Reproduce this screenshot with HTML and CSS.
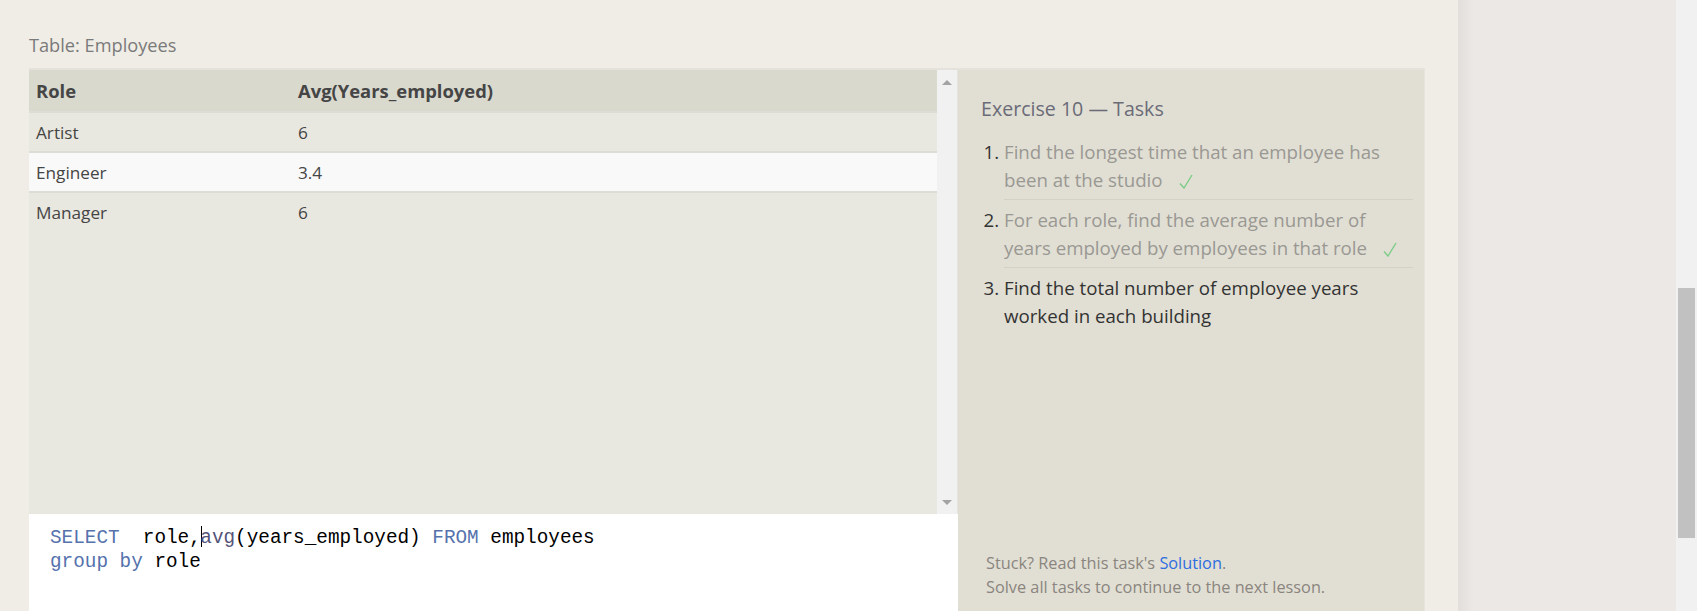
FILE: index.html
```html
<!DOCTYPE html>
<html lang="en">
<head>
<meta charset="utf-8">
<title>SQL Lesson — Exercise 10</title>
<link rel="stylesheet" href="styles.css">
</head>
<body>
<div class="page">
  <main class="content">
    <div class="caption">Table: Employees</div>
    <div class="workspace">
      <div class="left">
        <div class="results">
          <div class="table-area">
            <table class="grid">
              <thead>
                <tr><th class="c1">Role</th><th>Avg(Years_employed)</th></tr>
              </thead>
              <tbody>
                <tr><td class="c1">Artist</td><td>6</td></tr>
                <tr class="hl"><td class="c1">Engineer</td><td>3.4</td></tr>
                <tr><td class="c1">Manager</td><td>6</td></tr>
              </tbody>
            </table>
          </div>
          <div class="vscroll">
            <span class="arrow up"></span>
            <span class="arrow down"></span>
          </div>
        </div>
        <div class="editor">
<pre class="code"><span class="kw">SELECT</span>  role,<span class="caret"></span><span class="fn">avg</span>(years_employed) <span class="kw">FROM</span> employees
<span class="kw">group</span> <span class="kw">by</span> role</pre>
        </div>
      </div>
      <aside class="tasks">
        <h3 class="tasks-title">Exercise 10 — Tasks</h3>
        <ol class="task-list">
          <li class="done"><span class="task-text">Find the longest time that an employee has<br>been at the studio<svg class="check" width="14" height="15" viewBox="0 0 14 15"><polyline points="1,9.5 5,14 13,1" fill="none" stroke="#7ccb86" stroke-width="1.4"/></svg></span></li>
          <li class="done"><span class="task-text">For each role, find the average number of<br>years employed by employees in that role<svg class="check" width="14" height="15" viewBox="0 0 14 15"><polyline points="1,9.5 5,14 13,1" fill="none" stroke="#7ccb86" stroke-width="1.4"/></svg></span></li>
          <li><span class="task-text">Find the total number of employee years<br>worked in each building</span></li>
        </ol>
        <div class="tasks-footer">
          <div>Stuck? Read this task's <a class="link" href="#">Solution</a>.</div>
          <div>Solve all tasks to continue to the next lesson.</div>
        </div>
      </aside>
    </div>
  </main>
  <div class="side"></div>
  <div class="page-scroll"><div class="thumb"></div></div>
</div>
</body>
</html>
```

FILE: styles.css
```css
* { box-sizing: border-box; }
html, body { margin: 0; padding: 0; }
body {
  background: #f0ede6;
  font-family: "Open Sans", Lato, sans-serif;
  overflow: hidden;
}
.page {
  display: flex;
  height: 611px;
  overflow: hidden;
}
.content {
  width: 1458px;
  flex: none;
  padding: 33px 0 0 29px;
}
.caption {
  font-size: 18.2px;
  line-height: 24px;
  color: #7a7a7a;
  margin-bottom: 11px;
}
.workspace {
  display: flex;
  width: 1396px;
  border-top: 2px solid #e4e2db;
}
.left {
  width: 929px;
  flex: none;
  display: flex;
  flex-direction: column;
}
.results {
  display: flex;
  height: 444px;
}
.table-area {
  flex: 1;
  background: #e9e8e0;
}
.grid {
  width: 100%;
  border-collapse: collapse;
}
.grid th {
  background: #d9d9ce;
  height: 42px;
  text-align: left;
  font-weight: 700;
  font-size: 18.4px;
  color: #454545;
  padding: 0 7px;
}
.grid td {
  height: 40px;
  font-size: 17.2px;
  color: #454545;
  padding: 0 7px;
  border-top: 2px solid #dddcd5;
}
.grid .c1 { width: 262px; }
.grid tr.hl td { background: #f9f9f9; }
.vscroll {
  width: 21px;
  background: #f1f1f1;
  border-right: 1px solid #e6e4de;
  display: flex;
  flex-direction: column;
  justify-content: space-between;
  align-items: center;
  padding: 10px 0 9px;
}
.arrow {
  width: 0;
  height: 0;
  border-left: 5px solid transparent;
  border-right: 5px solid transparent;
}
.arrow.up { border-bottom: 5px solid #a3a3a3; }
.arrow.down { border-top: 5px solid #a3a3a3; }
.editor {
  background: #ffffff;
  height: 110px;
  padding: 12px 0 0 21px;
}
.code {
  margin: 0;
  font-family: "Liberation Mono", "DejaVu Sans Mono", monospace;
  font-size: 19.33px;
  line-height: 24px;
  color: #000;
}
.kw { color: #5572ad; }
.fn { color: #55557a; }
.caret {
  display: inline-block;
  width: 0;
  height: 21px;
  border-left: 1.5px solid #000;
  margin-right: -1.5px;
  vertical-align: -4px;
}
.tasks {
  width: 467px;
  flex: none;
  height: 541px;
  background: #e1dfd4;
  border-right: 1px solid #e6e4dc;
  display: flex;
  flex-direction: column;
  padding: 26px 11px 12px 23px;
}
.tasks-title {
  margin: 0;
  font-size: 19.6px;
  line-height: 26px;
  font-weight: 400;
  color: #6b6b78;
}
.task-list {
  margin: 10px 0 0;
  padding: 0 0 0 23px;
  color: #333;
  font-size: 18.7px;
  line-height: 28px;
}
.task-list li {
  padding: 6px 0 5px;
  border-bottom: 1px solid #d4d2c7;
}
.task-list li:last-child { border-bottom: none; }
.task-list li.done .task-text { color: #9a9893; }
.check {
  margin-left: 16px;
  vertical-align: -2px;
}
.tasks-footer {
  margin-top: auto;
  padding-left: 5px;
  font-size: 16.3px;
  line-height: 24px;
  color: #8a857e;
}
.link {
  color: #2f6de0;
  text-decoration: none;
}
.side {
  width: 218px;
  flex: none;
  background: linear-gradient(to right, #e1dedb 0, #ece8e5 16px, #ece8e5 100%);
}
.page-scroll {
  width: 21px;
  flex: none;
  background: #f1f1f1;
  padding: 288px 2px 0 2px;
}
.thumb {
  height: 250px;
  background: #c1c1c1;
}
```
